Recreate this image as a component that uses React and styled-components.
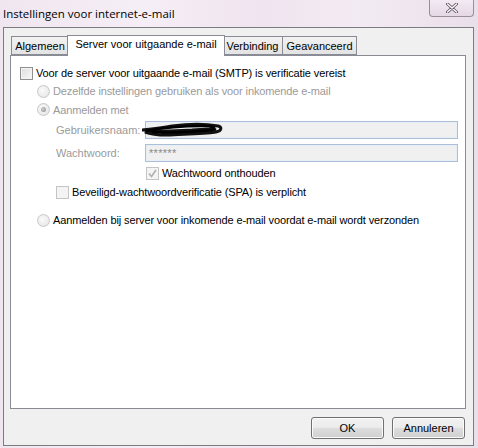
import React from "react";
import styled, { createGlobalStyle } from "styled-components";

const Global = createGlobalStyle`
  html, body {
    margin: 0;
    padding: 0;
    width: 478px;
    height: 448px;
    overflow: hidden;
    background: #ebe1ec;
    font-family: Tahoma, "Liberation Sans", sans-serif;
  }
`;

const Frame = styled.div`
  width: 478px;
  height: 448px;
  box-sizing: border-box;
  display: flex;
  flex-direction: column;
  padding: 0 4px 2px 3px;
  background: linear-gradient(90deg, #efe6ef 0%, #f6eef6 30%, #efe4ef 55%, #f3ebf3 75%, #e9dfea 100%);
`;

const TitleBar = styled.div`
  height: 27px;
  display: flex;
  align-items: flex-start;
  justify-content: space-between;
  flex-shrink: 0;
`;

const Title = styled.div`
  font-family: "Open Sans", "DejaVu Sans", sans-serif;
  font-size: 11.5px;
  color: #000;
  padding-top: 6px;
`;

const CloseButton = styled.div`
  width: 45px;
  height: 17px;
  box-sizing: border-box;
  border: 1px solid #9a8d9c;
  border-top: none;
  border-radius: 0 0 4px 4px;
  background: linear-gradient(#f3eaf3, #e4d8e5);
  display: flex;
  align-items: center;
  justify-content: center;
`;

const Client = styled.div`
  flex: 1;
  box-sizing: border-box;
  border: 1px solid #7c7c80;
  background: #f0f0f0;
  padding: 7px 7px 0 6px;
  display: flex;
  flex-direction: column;
`;

const TabRow = styled.div`
  display: flex;
  align-items: flex-end;
  height: 20px;
  padding-left: 1px;
  position: relative;
  z-index: 1;
`;

const Tab = styled.div`
  box-sizing: border-box;
  width: ${(p) => p.$w}px;
  height: ${(p) => (p.$active ? "21px" : "19px")};
  margin-bottom: ${(p) => (p.$active ? "-1px" : "0")};
  padding-top: ${(p) => (p.$active ? "2px" : "3px")};
  margin-left: ${(p) => (p.$active ? "-2px" : "0")};
  margin-right: ${(p) => (p.$active ? "-2px" : "0")};
  border: 1px solid #898c95;
  border-bottom: ${(p) => (p.$active ? "none" : "1px solid #898c95")};
  border-left: ${(p) => (p.$first || p.$active ? "1px solid #898c95" : "none")};
  background: ${(p) => (p.$active ? "#fff" : "linear-gradient(#f2f2f2, #e3e3e3)")};
  font-size: 11px;
  color: #000;
  text-align: center;
  white-space: nowrap;
  position: relative;
  z-index: ${(p) => (p.$active ? 2 : 1)};
`;

const Panel = styled.div`
  box-sizing: border-box;
  height: 354px;
  border: 1px solid #898c95;
  background: #fff;
  padding: 8px 0 0 9px;
  display: flex;
  flex-direction: column;
`;

const Row = styled.div`
  display: flex;
  align-items: center;
  height: ${(p) => p.$h || 19}px;
  padding-left: ${(p) => p.$indent || 0}px;
  font-size: 11px;
  letter-spacing: -0.12px;
  color: ${(p) => (p.$disabled ? "#9a9a9a" : "#000")};
  white-space: nowrap;
`;

const Check = styled.span`
  width: 13px;
  height: 13px;
  box-sizing: border-box;
  border: 1px solid ${(p) => (p.$disabled ? "#c4c4c4" : "#8e8f8f")};
  background: ${(p) =>
    p.$disabled ? "#f4f4f4" : "linear-gradient(135deg, #dcdcdc, #fafafa)"};
  box-shadow: inset 0 0 0 1px #f4f4f4;
  margin-right: 3px;
  display: flex;
  align-items: center;
  justify-content: center;
  flex-shrink: 0;
`;

const Radio = styled.span`
  width: 13px;
  height: 13px;
  box-sizing: border-box;
  border-radius: 50%;
  border: 1px solid #c8c8c8;
  background: radial-gradient(circle at 40% 40%, #fafafa, #e2e2e2);
  margin-right: 3px;
  display: flex;
  align-items: center;
  justify-content: center;
  flex-shrink: 0;
  &::after {
    content: "";
    display: ${(p) => (p.$checked ? "block" : "none")};
    width: 5px;
    height: 5px;
    border-radius: 50%;
    background: radial-gradient(circle at 40% 40%, #d0d0d0, #8a8a8a);
  }
`;

const FieldRow = styled.div`
  display: flex;
  align-items: center;
  height: ${(p) => p.$h}px;
  padding-left: 36px;
  font-size: 11px;
  color: #9a9a9a;
`;

const FieldLabel = styled.span`
  width: 89px;
  flex-shrink: 0;
`;

const Field = styled.div`
  position: relative;
  width: 313px;
  height: 18px;
  box-sizing: border-box;
  border: 1px solid #abbfd8;
  box-shadow: inset 0 0 0 1px #e8eef6;
  background: #f0f0f0;
  font-size: 11px;
  color: #8a8a8a;
  padding: 2px 0 0 3px;
  letter-spacing: 0.3px;
`;

const Scribble = styled.svg`
  position: absolute;
  left: -4px;
  top: 0px;
`;

const Footer = styled.div`
  flex: 1;
  display: flex;
  justify-content: flex-end;
  align-items: flex-start;
  gap: 8px;
  padding: 8px 1px 0 0;
`;

const Button = styled.div`
  width: 73px;
  height: 22px;
  box-sizing: border-box;
  border: 1px solid #707070;
  border-radius: 3px;
  background: linear-gradient(#f2f2f2 0%, #ebebeb 48%, #dddddd 52%, #cfcfcf 100%);
  box-shadow: inset 0 0 0 1px #fbfbfb;
  font-size: 11px;
  display: flex;
  align-items: center;
  justify-content: center;
  color: #000;
`;

const CheckMark = () => (
  <svg width="9" height="9" viewBox="0 0 9 9">
    <path d="M1 4.5 L3.5 7.5 L8 1" fill="none" stroke="#b0b0b0" strokeWidth="1.6" />
  </svg>
);

export default function App() {
  return (
    <>
      <Global />
      <Frame>
        <TitleBar>
          <Title>Instellingen voor internet-e-mail</Title>
          <CloseButton>
            <svg width="12" height="10" viewBox="0 0 12 10">
              <path
                d="M1.5 1 L10.5 9 M10.5 1 L1.5 9"
                stroke="#5a5060"
                strokeWidth="3"
                strokeLinecap="round"
              />
              <path
                d="M1.5 1 L10.5 9 M10.5 1 L1.5 9"
                stroke="#fff"
                strokeWidth="1.4"
                strokeLinecap="round"
              />
            </svg>
          </CloseButton>
        </TitleBar>
        <Client>
          <TabRow>
            <Tab $first $w={58}>Algemeen</Tab>
            <Tab $active $w={158}>Server voor uitgaande e-mail</Tab>
            <Tab $w={60}>Verbinding</Tab>
            <Tab $w={74}>Geavanceerd</Tab>
          </TabRow>
          <Panel>
            <Row $h={18}>
              <Check />
              Voor de server voor uitgaande e-mail (SMTP) is verificatie vereist
            </Row>
            <Row $indent={17} $h={18} $disabled>
              <Radio />
              Dezelfde instellingen gebruiken als voor inkomende e-mail
            </Row>
            <Row $indent={17} $h={19} $disabled>
              <Radio $checked />
              Aanmelden met
            </Row>
            <FieldRow $h={22}>
              <FieldLabel>Gebruikersnaam:</FieldLabel>
              <Field>
                <Scribble width="82" height="16" viewBox="0 0 82 16">
                  <path
                    d="M0 8 C10 7 20 6 30 4 C45 2 60 1 76 4 C80 5 80 9 74 10 C60 12 40 12 25 13 C15 13 8 12 3 10 C15 9 30 9 50 8 C62 7 70 7 74 8 C60 9 40 10 20 10"
                    fill="none"
                    stroke="#111"
                    strokeWidth="3"
                    strokeLinecap="round"
                  />
                  <path
                    d="M4 9 C20 6 40 4 60 4 C70 4 76 6 70 8 C50 10 30 11 10 10"
                    fill="none"
                    stroke="#000"
                    strokeWidth="2.5"
                  />
                </Scribble>
              </Field>
            </FieldRow>
            <FieldRow $h={24}>
              <FieldLabel>Wachtwoord:</FieldLabel>
              <Field>******</Field>
            </FieldRow>
            <Row $indent={126} $h={16}>
              <Check $disabled>
                <CheckMark />
              </Check>
              Wachtwoord onthouden
            </Row>
            <Row $indent={36} $h={22}>
              <Check $disabled />
              Beveiligd-wachtwoordverificatie (SPA) is verplicht
            </Row>
            <Row $indent={17} $h={34}>
              <Radio />
              Aanmelden bij server voor inkomende e-mail voordat e-mail wordt verzonden
            </Row>
          </Panel>
          <Footer>
            <Button>OK</Button>
            <Button>Annuleren</Button>
          </Footer>
        </Client>
      </Frame>
    </>
  );
}
